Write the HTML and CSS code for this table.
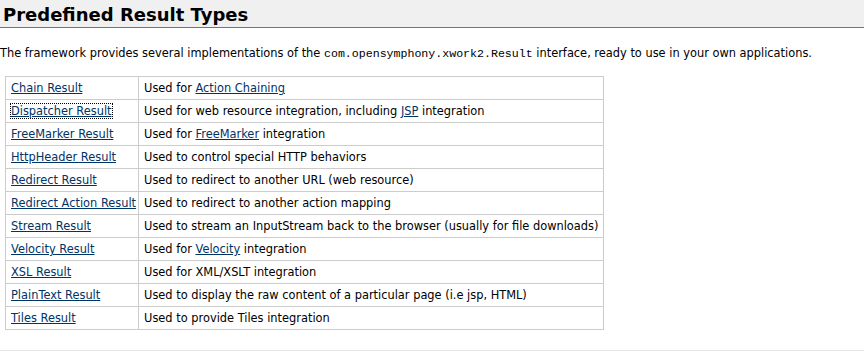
FILE: index.html
```html
<!DOCTYPE html>
<html lang="en">
<head>
  <meta charset="UTF-8" />
  <title>Predefined Result Types</title>
  <link rel="stylesheet" href="styles.css">
</head>
<body>
  <h1 class="page-title">Predefined Result Types</h1>

  <p class="intro">
    The framework provides several implementations of the <code>com.opensymphony.xwork2.Result</code> interface, ready to use in your own applications.
  </p>

  <table class="result-table">
    <tr>
      <td><a href="#">Chain Result</a></td>
      <td>Used for <a href="#">Action Chaining</a></td>
    </tr>
    <tr>
      <td><a href="#" class="focused">Dispatcher Result</a></td>
      <td>Used for web resource integration, including <a href="#">JSP</a> integration</td>
    </tr>
    <tr>
      <td><a href="#">FreeMarker Result</a></td>
      <td>Used for <a href="#">FreeMarker</a> integration</td>
    </tr>
    <tr>
      <td><a href="#">HttpHeader Result</a></td>
      <td>Used to control special HTTP behaviors</td>
    </tr>
    <tr>
      <td><a href="#">Redirect Result</a></td>
      <td>Used to redirect to another URL (web resource)</td>
    </tr>
    <tr>
      <td><a href="#">Redirect Action Result</a></td>
      <td>Used to redirect to another action mapping</td>
    </tr>
    <tr>
      <td><a href="#">Stream Result</a></td>
      <td>Used to stream an InputStream back to the browser (usually for file downloads)</td>
    </tr>
    <tr>
      <td><a href="#">Velocity Result</a></td>
      <td>Used for <a href="#">Velocity</a> integration</td>
    </tr>
    <tr>
      <td><a href="#">XSL Result</a></td>
      <td>Used for XML/XSLT integration</td>
    </tr>
    <tr>
      <td><a href="#">PlainText Result</a></td>
      <td>Used to display the raw content of a particular page (i.e jsp, HTML)</td>
    </tr>
    <tr>
      <td><a href="#">Tiles Result</a></td>
      <td>Used to provide Tiles integration</td>
    </tr>
  </table>

  <div class="footer-rule"></div>
</body>
</html>
```

FILE: styles.css
```css
body {
  margin: 0;
  padding: 0;
  background: #fff;
  color: #000;
  font-family: "DejaVu Sans", Verdana, sans-serif;
  font-size: 11.4px;
}

a {
  color: #003366;
  text-decoration: underline;
}

/* page heading with grey band */
.page-title {
  margin: 0;
  padding: 3px 3px 0;
  height: 24px;
  background: #f0f0f0;
  border-bottom: 1px solid #5c7a99;
  font-size: 18px;
  font-weight: bold;
  line-height: 24px;
}

.intro {
  margin: 17px 0 0;
  line-height: 16px;
}

.intro code {
  font-family: "Liberation Mono", "Courier New", monospace;
  font-size: 11.6px;
}

.result-table {
  border-collapse: collapse;
  margin: 14px 0 0 5px;
}

.result-table td {
  border: 1px solid #cccccc;
  padding: 0 2px 0 5px;
  height: 22px;
  white-space: nowrap;
}

.result-table td + td {
  padding: 0 5px 0 5px;
}

.focused {
  outline: 1px dotted #000;
}

.footer-rule {
  margin-top: 20px;
  border-top: 1px solid #e6e6e6;
}
```
